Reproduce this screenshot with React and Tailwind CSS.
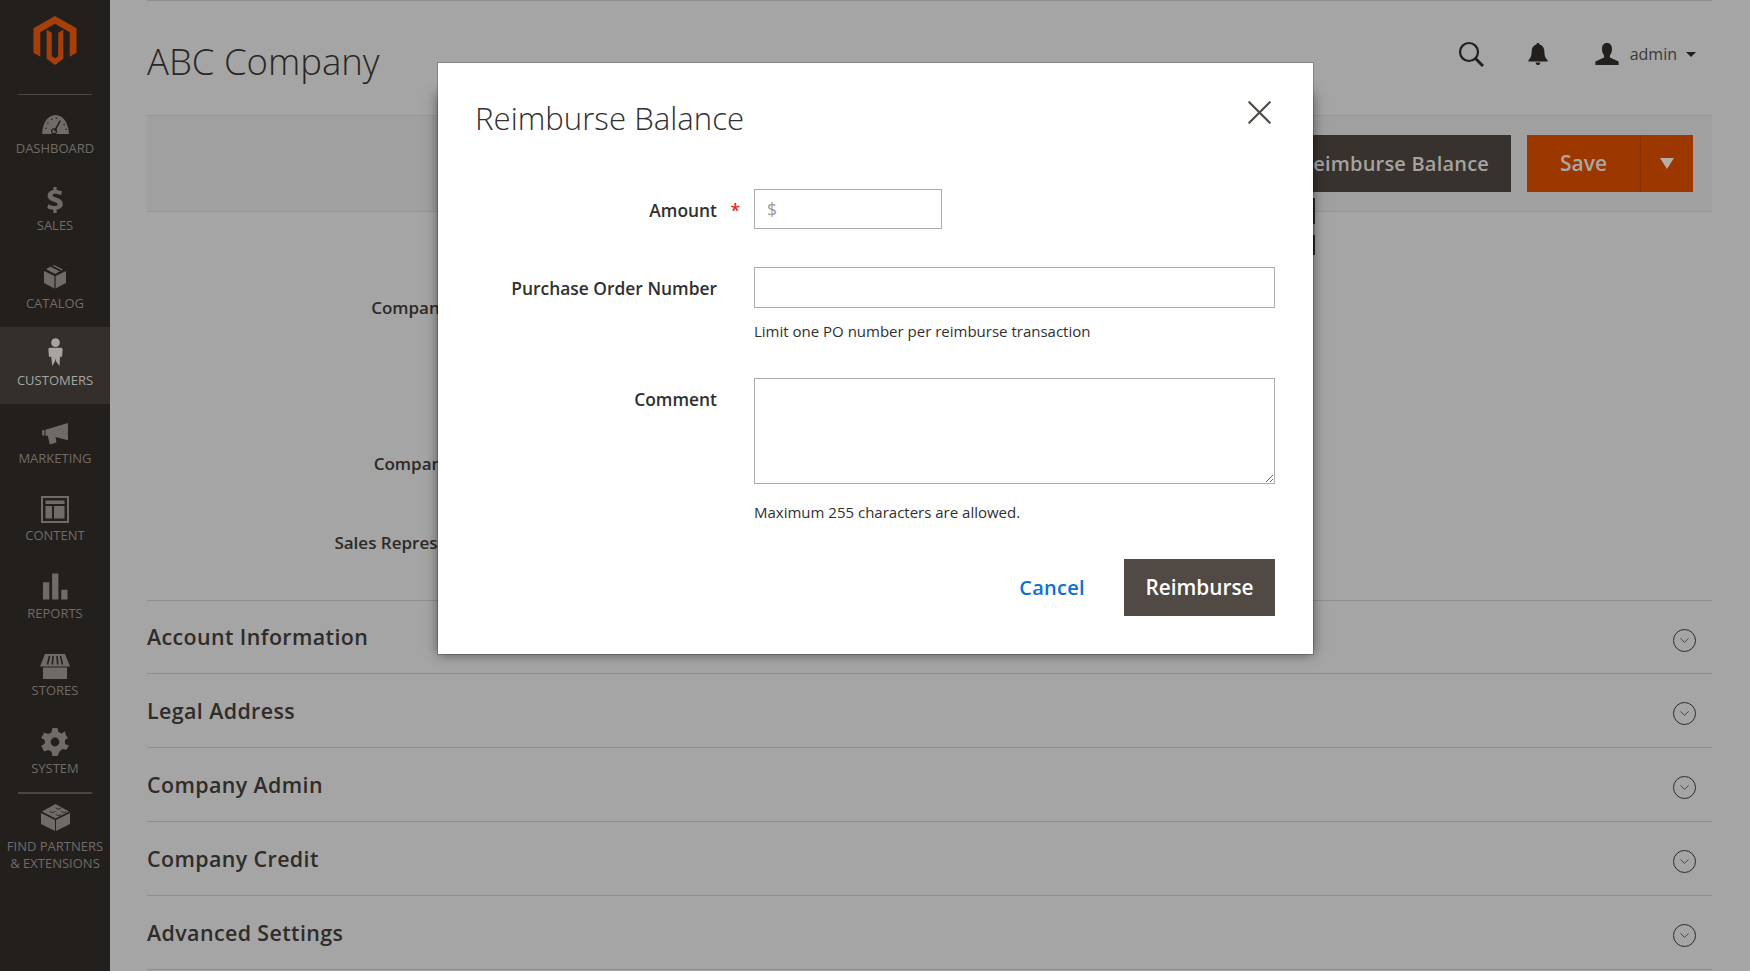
import { ChevronDown, X } from "lucide-react";

const GLYPH = "fill-[#6f6c68]";

function DashboardIcon({ className }) {
  return (
    <svg viewBox="0 0 30 22" className={className}>
      <path d="M1 21 C1 10 7 1 15 1 C23 1 29 10 29 21 Z" />
      <path d="M14 18 L20 7" stroke="#231f1c" strokeWidth="1.6" />
      <circle cx="13.5" cy="18" r="2.6" fill="none" stroke="#231f1c" strokeWidth="1.2" />
      <g fill="#231f1c">
        <circle cx="5" cy="15" r=".8" />
        <circle cx="7" cy="9.5" r=".8" />
        <circle cx="11" cy="5.5" r=".8" />
        <circle cx="16" cy="4.5" r=".8" />
        <circle cx="24" cy="11" r=".8" />
        <circle cx="26" cy="16" r=".8" />
      </g>
    </svg>
  );
}

function DollarIcon({ className }) {
  return (
    <svg viewBox="0 0 16 26" className={className}>
      <path d="M6.4 0 H9.6 V3 C11.6 3.2 13.6 3.8 15 4.6 L13.8 8.2 C12 7.2 10 6.7 8.2 6.7 C6.4 6.7 5.6 7.3 5.6 8.2 C5.6 9.2 6.8 9.8 9.6 10.7 C13.7 12 15.8 13.8 15.8 17 C15.8 20 13.6 22 9.6 22.6 V26 H6.4 V22.8 C4 22.6 1.8 22 .2 21 L1.4 17.3 C3.2 18.4 5.6 19.1 7.6 19.1 C9.6 19.1 10.6 18.4 10.6 17.3 C10.6 16.2 9.6 15.6 6.9 14.7 C2.9 13.4 .6 11.7 .6 8.5 C.6 5.6 2.7 3.6 6.4 3 Z" />
    </svg>
  );
}

function CatalogIcon({ className }) {
  return (
    <svg viewBox="0 0 24 26" className={className}>
      <path d="M1 8 L11.4 13 V25.5 L1 20 Z" />
      <path d="M23 8 L12.6 13 V25.5 L23 20 Z" />
      <path d="M3 6 L11 2 L20 6.5 L12 11 Z" />
      <path d="M7.5 3.7 L9.5 2.7 L18.5 7.2 L16.5 8.3 Z" fill="#231f1c" />
    </svg>
  );
}

function CustomersIcon({ className }) {
  return (
    <svg viewBox="0 0 16 30" className={className}>
      <circle cx="8" cy="5" r="4.6" />
      <path d="M2 10.5 H14 C15 10.5 15.6 11.4 15.6 12.4 L15 20 L12.8 20 L12.3 30 L8.6 25 L8 22 L7.4 25 L4.5 30 L3.4 20 L1 20 L.4 12.4 C.4 11.4 1 10.5 2 10.5 Z" />
    </svg>
  );
}

function MarketingIcon({ className }) {
  return (
    <svg viewBox="0 0 28 23" className={className}>
      <path d="M0 7.5 H2.5 V13 H0 Z" />
      <path d="M3.5 7 L27 0 V18 L14 14.6 L15 20.5 L8 22.5 L6 13.4 L3.5 13.2 Z" />
    </svg>
  );
}

function ContentIcon({ className }) {
  return (
    <svg viewBox="0 0 28 27" className={className}>
      <path fillRule="evenodd" d="M0 0 H28 V27 H0 Z M2 2 V25 H26 V2 Z" />
      <path d="M4.5 4.5 H23.5 V8 H4.5 Z M4.5 10 H11 V22.5 H4.5 Z M13 10 H23.5 V22.5 H13 Z" />
    </svg>
  );
}

function ReportsIcon({ className }) {
  return (
    <svg viewBox="0 0 26 27" className={className}>
      <path d="M0 9 H6.5 V27 H0 Z M9.5 0 H16 V27 H9.5 Z M19 17 H25.5 V27 H19 Z" />
    </svg>
  );
}

function StoresIcon({ className }) {
  return (
    <svg viewBox="0 0 30 25" className={className}>
      <path d="M3 13.5 H27 V25 H3 Z" />
      <path d="M5 0 H25 L30 12.5 H0 Z" />
      <path d="M9.5 2 L7.5 10.5 M13 2 L12.3 10.5 M17 2 L17.7 10.5 M20.5 2 L22.5 10.5" stroke="#231f1c" strokeWidth="1.6" />
    </svg>
  );
}

function SystemIcon({ className }) {
  return (
    <svg viewBox="0 0 28 28" className={className}>
      <path
        fillRule="evenodd"
        d="M11.5 0 H16.5 L17.4 4 L20.6 5.4 L24 3.2 L24.9 7.2 L27 10 L24 12 V16 L27.9 17.5 L25.4 21.8 L21.4 20.9 L18.6 23.4 L16.5 28 H11.5 L10.4 23.6 L7.2 21.9 L3.2 23.4 L.2 18 L3.8 15.6 V12 L.2 10 L3.2 4.7 L7.2 6 L10.4 4.4 Z M14 9.6 A4.4 4.4 0 1 0 14 18.4 A4.4 4.4 0 1 0 14 9.6 Z"
      />
    </svg>
  );
}

function PartnersIcon({ className }) {
  return (
    <svg viewBox="0 0 29 28" className={className}>
      <path d="M14 28 L0 21 V10 L14 17 Z" />
      <path d="M15 28 L29 21 V10 L15 17 Z" />
      <path d="M14.5 1 L28 8.5 L14.5 15.5 L1 8.5 Z" />
      <g fill="none" stroke="#231f1c" strokeWidth=".9">
        <path d="M9 8 C9 10 14 10 14 8" />
        <path d="M15 4.5 C15 6.5 20 6.5 20 4.5" />
        <path d="M15 11 C15 13 20 13 20 11" />
        <path d="M20.5 8 C20.5 10 25 10 25 8" />
      </g>
    </svg>
  );
}

const navItems = [
  { label: "Dashboard", Icon: DashboardIcon, size: "w-[29px] h-[21px] mt-[4px]" },
  { label: "Sales", Icon: DollarIcon, size: "w-[16px] h-[26px]" },
  { label: "Catalog", Icon: CatalogIcon, size: "w-[24px] h-[26px] -mt-[4px]" },
  { label: "Customers", Icon: CustomersIcon, size: "w-[15px] h-[30px] -mt-[6px]", active: true },
  { label: "Marketing", Icon: MarketingIcon, size: "w-[27px] h-[22px] mt-[2px]" },
  { label: "Content", Icon: ContentIcon, size: "w-[28px] h-[27px] -mt-[2px]" },
  { label: "Reports", Icon: ReportsIcon, size: "w-[25px] h-[27px] -mt-[2px]" },
  { label: "Stores", Icon: StoresIcon, size: "w-[30px] h-[25px] mt-[2px]" },
  { label: "System", Icon: SystemIcon, size: "w-[28px] h-[28px] -mt-[2px]" },
];

const sections = [
  { title: "Account Information", height: "h-[73px]" },
  { title: "Legal Address", height: "h-[74px]" },
  { title: "Company Admin", height: "h-[74px]" },
  { title: "Company Credit", height: "h-[74px]" },
  { title: "Advanced Settings", height: "h-[74px]" },
];

function Sidebar() {
  return (
    <aside className="w-[110px] shrink-0 h-[971px] bg-[#231f1c] flex flex-col items-center">
      <div className="h-[94px] w-full shrink-0 flex flex-col items-center">
        <svg viewBox="0 0 44 50" className="w-[44px] h-[49px] mt-[16px] fill-[#a63f0a]">
          <path d="M22 0 L44 12.5 V37.5 L37 41.5 V16.5 L22 8 L7 16.5 V41.5 L0 37.5 V12.5 Z" />
          <path d="M18.7 17 V41 L22 43 L25.3 41 V17 L30.5 14 V43.5 L22 50 L13.5 43.5 V14 Z" />
        </svg>
      </div>
      <div className="h-px w-[74px] bg-[#4a4643] shrink-0 -mb-px" />
      {navItems.map(({ label, Icon, size, active }) => (
        <a
          key={label}
          className={`w-full h-[77.5px] shrink-0 flex flex-col items-center justify-end pb-[15px] text-[13px] leading-[17px] uppercase ${
            active ? "bg-[#352f2c] text-[#a8a5a0]" : "text-[#6f6c68]"
          }`}
        >
          <div className="h-[34px] flex items-center justify-center">
            <Icon className={`${size} ${active ? "fill-[#a8a5a0]" : GLYPH}`} />
          </div>
          <span>{label}</span>
        </a>
      ))}
      <div className="h-[2px] w-[74px] bg-[#4a4643] shrink-0" />
      <a className="w-full flex flex-col items-center pt-[9px] text-[13px] leading-[17px] uppercase text-[#6f6c68] text-center">
        <PartnersIcon className={`w-[29px] h-[28px] ${GLYPH} mb-[7px]`} />
        <span className="whitespace-nowrap">Find Partners</span>
        <span className="whitespace-nowrap">&amp; Extensions</span>
      </a>
    </aside>
  );
}

function TopBar() {
  return (
    <header className="h-[114px] flex items-start justify-between">
      <h1 className="text-[36.5px] leading-[46px] font-light text-[#2a2623] mt-[37px]">ABC Company</h1>
      <div className="flex items-center mt-[40px] mr-[16px] text-[#231f1c]">
        <svg viewBox="0 0 26 26" className="w-[26px] h-[26px] fill-none stroke-[#231f1c]">
          <circle cx="11" cy="11" r="9" strokeWidth="2.2" />
          <path d="M17.5 17.5 L25 25" strokeWidth="3" />
        </svg>
        <svg viewBox="0 0 20 22" className="w-[20px] h-[22px] ml-[44px] fill-[#231f1c]">
          <path d="M10 0 C11 0 11.6 .7 11.6 1.6 C15 2.6 16.4 5.4 16.4 9 C16.4 13 17.4 15 19.5 17 V18.4 H.5 V17 C2.6 15 3.6 13 3.6 9 C3.6 5.4 5 2.6 8.4 1.6 C8.4 .7 9 0 10 0 Z" />
          <path d="M7.6 19.4 H12.4 C12.2 21 11.2 22 10 22 C8.8 22 7.8 21 7.6 19.4 Z" />
        </svg>
        <svg viewBox="0 0 24 22" className="w-[24px] h-[22px] ml-[47px] fill-[#231f1c]">
          <path d="M12 0 C15.4 0 17 2.4 17 6 C17 9 16 11 14.9 12.4 V14.4 L23.6 18.5 V22 H.4 V18.5 L9.1 14.4 V12.4 C8 11 7 9 7 6 C7 2.4 8.6 0 12 0 Z" />
        </svg>
        <span className="ml-[11px] text-[16px] leading-[22px] text-[#3b3835]">admin</span>
        <span className="ml-[9px] w-0 h-0 border-x-[5px] border-x-transparent border-t-[5px] border-t-[#231f1c]" />
      </div>
    </header>
  );
}

function ActionBar() {
  return (
    <div className="h-[97px] bg-[#a0a0a0] border-y border-[#969696] flex items-center justify-end pr-[19px]">
      <button className="h-[57px] px-[22px] bg-[#38322e] text-[#a5a3a0] text-[20px] font-semibold tracking-[.2px] whitespace-nowrap">
        Reimburse Balance
      </button>
      <div className="flex h-[57px] ml-[16px] bg-[#9c3700] text-[#ada6a0]">
        <button className="w-[114px] text-[21px] font-semibold border-r border-[#8a3000]">Save</button>
        <button className="w-[52px] flex items-center justify-center">
          <span className="w-0 h-0 border-x-[7.5px] border-x-transparent border-t-[11px] border-t-[#b5aeaa]" />
        </button>
      </div>
    </div>
  );
}

function BackgroundFields() {
  return (
    <div className="h-[388px] relative">
      <div className="w-[358px] pt-[85px] text-right text-[17px] leading-[22px] font-semibold text-[#2d2a27] whitespace-nowrap">
        <p>Company Status</p>
        <p className="mt-[134px]">Company Name</p>
        <p className="mt-[57px]">Sales Representative</p>
      </div>
      {/* tooltip peeking out from behind the modal */}
      <div className="absolute left-[1166px] top-[-14px] w-[2px] h-[57px] bg-[#2c2825]">
        <div className="mt-[26px] h-[11px] bg-[#8f8d8b]" />
      </div>
    </div>
  );
}

function Section({ title, height }) {
  return (
    <div className={`${height} border-t border-[#8e8e8e] flex items-center justify-between pr-[16px]`}>
      <span className="text-[21.4px] font-semibold leading-[30px] tracking-[.4px] text-[#2f2c29]">{title}</span>
      <span className="w-[23px] h-[23px] rounded-full border border-[#2f2c29] flex items-center justify-center mt-[6px]">
        <ChevronDown className="w-[15px] h-[15px] text-[#2f2c29]" strokeWidth={1.25} />
      </span>
    </div>
  );
}

function ReimburseModal() {
  return (
    <div className="absolute inset-0 flex items-start justify-center">
      <div className="relative w-[875px] h-[591px] mt-[63px] ml-[1px]">
        {/* the drop shadow only starts a bit below the top of the dialog in the screenshot */}
        <div className="absolute inset-x-0 top-[30px] bottom-0 shadow-[0_0_12px_rgba(0,0,0,0.5)]" />
        <div className="relative h-full bg-white shadow-[0_0_0_1px_rgba(0,0,0,0.2)] pl-[37px] pr-[38px] pt-[34px] text-[#303030]">
          <button className="absolute right-[33px] top-[29px] text-[#514943]">
            <X className="w-[41px] h-[41px]" strokeWidth={1.25} />
          </button>
          <h2 className="text-[31.2px] leading-[42px] font-light">Reimburse Balance</h2>

          <div className="mt-[50px] grid grid-cols-[279px_1fr] items-start">
            <label className="pt-[9px] pr-[37px] text-right text-[17.4px] leading-[24px] font-semibold relative">
              Amount
              <span className="absolute right-[14px] top-[9px] text-[#e22626]">*</span>
            </label>
            <div className="w-[188px] h-[40px] border border-[#adadad] flex items-center pl-[12px] text-[17.5px] text-[#9a9a9a]">
              $
            </div>

            <label className="mt-[38px] pt-[9px] pr-[37px] text-right text-[17.4px] leading-[24px] font-semibold">
              Purchase Order Number
            </label>
            <div className="mt-[38px]">
              <input className="w-[521px] h-[41px] border border-[#adadad] block outline-none" />
              <p className="mt-[13px] text-[15px] leading-[20px]">Limit one PO number per reimburse transaction</p>
            </div>

            <label className="mt-[37px] pt-[9px] pr-[37px] text-right text-[17.4px] leading-[24px] font-semibold">
              Comment
            </label>
            <div className="mt-[37px]">
              <textarea className="w-[521px] h-[106px] border border-[#adadad] block outline-none" />
              <p className="mt-[18px] text-[15px] leading-[20px]">Maximum 255 characters are allowed.</p>
            </div>
          </div>

          <div className="mt-[37px] flex items-center justify-end">
            <a className="text-[#0a6fd6] text-[20px] font-semibold mr-[39px] tracking-[.3px]">Cancel</a>
            <button className="w-[151px] h-[57px] bg-[#514943] text-white text-[20.8px] font-semibold">Reimburse</button>
          </div>
        </div>
      </div>
    </div>
  );
}

export default function App() {
  return (
    <div
      className="relative w-[1750px] h-[971px] overflow-hidden bg-[#a5a5a5]"
      style={{ fontFamily: '"Open Sans", sans-serif' }}
    >
      <div className="flex h-full">
        <Sidebar />
        <main className="flex-1 pl-[37px] pr-[38px]">
          <div className="h-px bg-[#8e8e8e]" />
          <TopBar />
          <ActionBar />
          <BackgroundFields />
          {sections.map((s) => (
            <Section key={s.title} title={s.title} height={s.height} />
          ))}
          <div className="border-t border-[#8e8e8e]" />
        </main>
      </div>
      <ReimburseModal />
    </div>
  );
}
